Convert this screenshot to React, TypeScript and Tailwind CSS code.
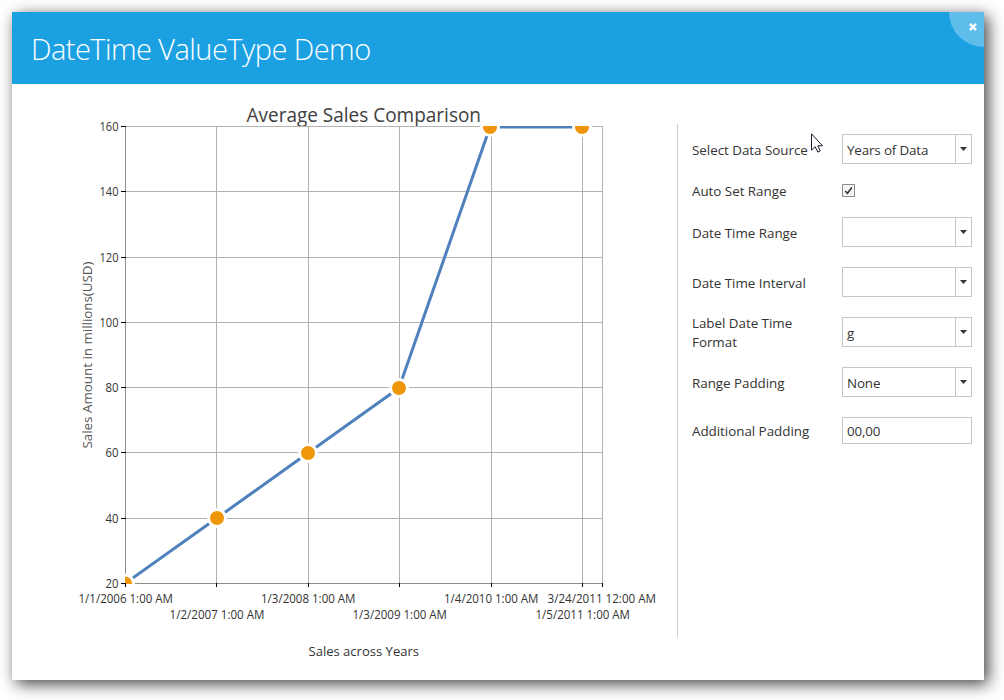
import React from "react";

const xLines = [125, 216, 308, 399, 491, 582, 602];
const yTicks = [
  { y: 126, label: "160" },
  { y: 191, label: "140" },
  { y: 257, label: "120" },
  { y: 322, label: "100" },
  { y: 387, label: "80" },
  { y: 452, label: "60" },
  { y: 518, label: "40" },
  { y: 583, label: "20" },
];
const dates = [
  { x: 78.5, y: 603, w: 94.5, label: "1/1/2006 1:00 AM" },
  { x: 169.5, y: 619, w: 95, label: "1/2/2007 1:00 AM" },
  { x: 261, y: 603, w: 94.5, label: "1/3/2008 1:00 AM" },
  { x: 352.5, y: 619, w: 94.5, label: "1/3/2009 1:00 AM" },
  { x: 444, y: 603, w: 94.5, label: "1/4/2010 1:00 AM" },
  { x: 547.5, y: 603, w: 108.5, label: "3/24/2011 12:00 AM" },
  { x: 535.5, y: 619, w: 94.5, label: "1/5/2011 1:00 AM" },
];
const points = [
  [125, 583.5],
  [217, 518],
  [308, 453],
  [399, 388],
  [490, 127],
  [582, 127],
];

function Chart() {
  return (
    <svg
      className="h-[596px] w-[665px] shrink-0"
      viewBox="12 84 665 596"
      fill="#333"
      fontFamily="'Open Sans', 'Noto Sans', sans-serif"
    >
      <defs>
        <clipPath id="plot">
          <rect x="125" y="126" width="478" height="458" />
        </clipPath>
        <clipPath id="heading">
          <rect x="230" y="90" width="270" height="36" />
        </clipPath>
      </defs>
      <text x="246.5" y="122" fontSize="19.5" textLength="234.5" lengthAdjust="spacingAndGlyphs" fill="#404040" clipPath="url(#heading)">
        Average Sales Comparison
      </text>
      <g stroke="#b3b3b3" strokeWidth="1">
        {yTicks.map((t) => (
          <path key={t.y} d={`M125 ${t.y + 0.5}H603`} />
        ))}
        {xLines.map((x) => (
          <path key={x} d={`M${x + 0.5} 126V584`} />
        ))}
      </g>
      <path d="M125.5 126V583.5H603" fill="none" stroke="#8c8c8c" />
      <g clipPath="url(#plot)">
        <polyline points={points.map((p) => p.join(",")).join(" ")} fill="none" stroke="#4f81bd" strokeWidth="3" strokeLinejoin="round" />
        {points.map(([x, y]) => (
          <circle key={x} cx={x} cy={y} r="8.5" fill="#f0960a" stroke="#fff" strokeWidth="3" />
        ))}
      </g>
      <g stroke="#000">
        {yTicks.map((t) => (
          <path key={t.y} d={`M121 ${t.y + 0.5}H126`} />
        ))}
        {xLines.map((x) => (
          <path key={x} d={`M${x + 0.5} 583V587`} />
        ))}
      </g>
      {yTicks.map((t) => {
        const w = t.label.length === 3 ? 19 : 13;
        return (
          <text key={t.y} x={118.5 - w} y={t.y + 5} fontSize="12" textLength={w} lengthAdjust="spacingAndGlyphs">
            {t.label}
          </text>
        );
      })}
      {dates.map((d) => (
        <text key={d.label} x={d.x} y={d.y} fontSize="12" textLength={d.w} lengthAdjust="spacingAndGlyphs">
          {d.label}
        </text>
      ))}
      <text x="308.5" y="656" fontSize="13" textLength="110.5" lengthAdjust="spacingAndGlyphs">
        Sales across Years
      </text>
      <text transform="translate(92 448.5) rotate(-90)" fontSize="13.3" textLength="187" lengthAdjust="spacingAndGlyphs" fill="#555">
        Sales Amount in millions(USD)
      </text>
    </svg>
  );
}

function Combo({ value = "" }: { value?: string }) {
  return (
    <div className="flex h-[30px] w-[130px] border border-[#c6c6c6] bg-white">
      <span className="flex-1 pt-[6px] pl-1 leading-[19px] tracking-[-0.15px]">{value}</span>
      <span className="flex w-[16px] justify-center border-l border-[#c6c6c6] pt-3">
        <svg className="h-1 w-[7px]" viewBox="0 0 7 4">
          <path d="M0 0h7L3.5 4z" fill="#333" />
        </svg>
      </span>
    </div>
  );
}

function Row({ label, className, children }: { label: string; className: string; children: React.ReactNode }) {
  return (
    <div className={`flex items-start ${className}`}>
      <div className="w-[150px] shrink-0 pt-[7px] leading-[19px]">
        <span className="block whitespace-nowrap">{label}</span>
      </div>
      {children}
    </div>
  );
}

export default function App() {
  return (
    <div className="h-[700px] w-[1004px] overflow-hidden bg-white p-3 font-['Open_Sans','Noto_Sans',sans-serif] text-[#333]">
      <div className="relative h-[668px] w-[972px] bg-white shadow-[4px_4px_15px_rgba(0,0,0,0.75)]">
        <header className="flex h-[72px] items-center bg-[#1ba1e2] pl-[19px]">
          <h1 className="pt-[2px] whitespace-nowrap text-[29px] font-light tracking-[-0.55px] text-white">DateTime ValueType Demo</h1>
        </header>
        <button aria-label="Close" className="absolute top-0 right-0 h-[35px] w-[35px] rounded-bl-full bg-[#5fbdeb]">
          <svg className="absolute top-[11px] left-5 h-2 w-2" viewBox="0 0 8 8">
            <path d="M.9.9l6.2 6.2M7.1.9L.9 7.1" stroke="#fff" strokeWidth="2.2" />
          </svg>
        </button>
        <main className="flex h-[596px]">
          <Chart />
          <section className="mt-10 h-[513px] w-[307px] border-l border-[#ccc] pt-[10px] pl-[14px] text-[13.4px] tracking-[-0.03px]">
            <Row label="Select Data Source" className="h-[50px]">
              <Combo value="Years of Data" />
            </Row>
            <Row label="Auto Set Range" className="-mt-[9px] h-[42px]">
              <span className="mt-[9px] flex h-[13px] w-[13px] items-center justify-center border border-[#8e8e8e] bg-[#f4f4f4]">
                <svg className="h-[9px] w-[9px]" viewBox="0 0 9 9">
                  <path d="M1.2 5L3.5 7.3 7.8 1.5" fill="none" stroke="#333" strokeWidth="1.5" />
                </svg>
              </span>
            </Row>
            <Row label="Date Time Range" className="h-[50px]">
              <Combo />
            </Row>
            <Row label="Date Time Interval" className="h-[50px]">
              <Combo />
            </Row>
            <div className="flex h-[50px]">
              <div className="-mt-[3px] w-[150px] leading-[19px]">
                Label Date Time
                <br />
                Format
              </div>
              <Combo value="g" />
            </div>
            <Row label="Range Padding" className="h-[48px]">
              <Combo value="None" />
            </Row>
            <Row label="Additional Padding" className="h-[30px]">
              <div className="mt-[2px] h-[27px] w-[130px] border border-[#c6c6c6] pt-[4px] pl-1 leading-[19px] tracking-[-0.15px]">00,00</div>
            </Row>
          </section>
        </main>
        <svg className="absolute top-[121px] left-[798px] h-[21px] w-[14px]" viewBox="0 0 14 21">
          <path d="M1.5.8v16.4l3.6-3.5 2.7 5.4 2.5-1.2-2.5-5.1h4.7z" fill="#fff" stroke="#1b1b2b" />
        </svg>
      </div>
    </div>
  );
}
